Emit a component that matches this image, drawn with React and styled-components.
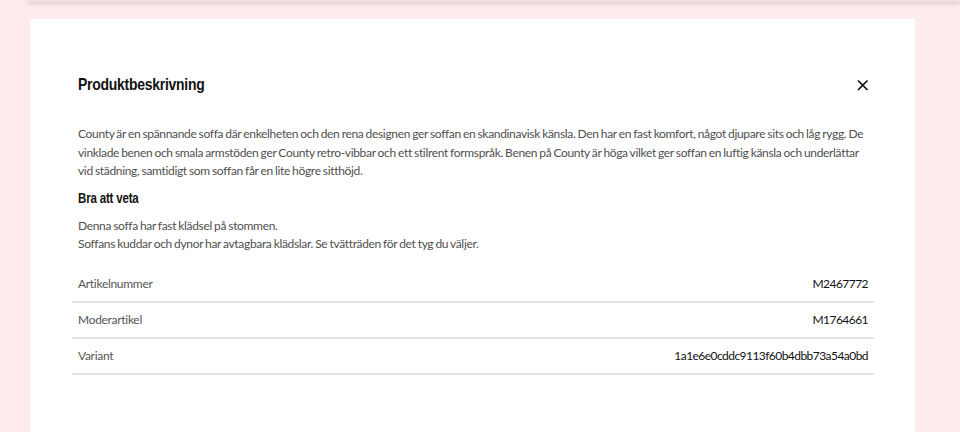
import React from "react";
import styled, { createGlobalStyle } from "styled-components";

const Global = createGlobalStyle`
  html, body { margin: 0; padding: 0; background: #fdeceb; }
  body { font-family: "Lato", "Noto Sans", sans-serif; overflow: hidden; }
  * { box-sizing: border-box; }
`;

const Page = styled.div`
  width: 960px;
  height: 432px;
  display: flex;
  flex-direction: column;
  overflow: hidden;
`;

const BehindBar = styled.div`
  height: 2px;
  margin-left: 27px;
  background: #f3e0e0;
  box-shadow: 0 1px 4px rgba(90, 40, 40, 0.35);
  flex-shrink: 0;
`;

const Modal = styled.section`
  margin: 17px 45px 0 30px;
  flex: 1;
  background: #fff;
  padding: 56px 47px 0 48px;
  display: flex;
  flex-direction: column;
`;

const Header = styled.header`
  display: flex;
  align-items: center;
  justify-content: space-between;
  height: 20px;
  margin-bottom: 30px;
`;

const Title = styled.h2`
  margin: 0;
  display: inline-block;
  font-family: "Liberation Sans", Arial, sans-serif;
  font-weight: 700;
  font-size: 17px;
  color: #111;
  letter-spacing: -0.3px;
  transform: scaleX(0.82);
  transform-origin: left center;
  white-space: nowrap;
`;

const Close = styled.button`
  border: 0;
  background: none;
  padding: 0;
  margin-right: -1px;
  width: 14px;
  height: 14px;
  display: flex;
  cursor: pointer;
`;

const Paragraph = styled.p`
  margin: 0;
  font-size: 12px;
  line-height: 18.5px;
  letter-spacing: -0.33px;
  word-spacing: -0.6px;
  color: #4f4f4f;
`;

const SubTitle = styled.h3`
  margin: 9px 0 11px;
  display: inline-block;
  font-family: "Liberation Sans", Arial, sans-serif;
  font-weight: 700;
  font-size: 14px;
  color: #111;
  letter-spacing: -0.2px;
  transform: scaleX(0.82);
  transform-origin: left center;
  white-space: nowrap;
`;

const Table = styled.div`
  margin: 13px -6px 0;
  display: flex;
  flex-direction: column;
`;

const Row = styled.div`
  display: flex;
  justify-content: space-between;
  align-items: center;
  height: 36.3px;
  padding: 0 6px 1px;
  border-bottom: 2px solid #e3e3e3;
  font-size: 12px;
`;

const Label = styled.span`
  color: #555;
  letter-spacing: -0.3px;
`;

const Value = styled.span`
  color: #111;
  letter-spacing: -0.55px;
`;

const rows = [
  ["Artikelnummer", "M2467772"],
  ["Moderartikel", "M1764661"],
  ["Variant", "1a1e6e0cddc9113f60b4dbb73a54a0bd"],
];

export default function App() {
  return (
    <Page>
      <Global />
      <BehindBar />
      <Modal>
        <Header>
          <Title>Produktbeskrivning</Title>
          <Close aria-label="Stäng">
            <svg width="14" height="14" viewBox="0 0 14 14">
              <path d="M3 2.5 L12.5 12 M12.5 2.5 L3 12" stroke="#111" strokeWidth="1.7" />
            </svg>
          </Close>
        </Header>
        <Paragraph>
          County är en spännande soffa där enkelheten och den rena designen ger soffan en skandinavisk känsla. Den har en fast komfort, något djupare sits och låg rygg. De vinklade benen och smala armstöden ger County retro-vibbar och ett stilrent formspråk. Benen på County är höga vilket ger soffan en luftig känsla och underlättar vid städning, samtidigt som soffan får en lite högre sitthöjd.
        </Paragraph>
        <div>
          <SubTitle>Bra att veta</SubTitle>
        </div>
        <Paragraph>
          Denna soffa har fast klädsel på stommen.
          <br />
          Soffans kuddar och dynor har avtagbara klädslar. Se tvätträden för det tyg du väljer.
        </Paragraph>
        <Table>
          {rows.map(([l, v]) => (
            <Row key={l}>
              <Label>{l}</Label>
              <Value>{v}</Value>
            </Row>
          ))}
        </Table>
      </Modal>
    </Page>
  );
}
